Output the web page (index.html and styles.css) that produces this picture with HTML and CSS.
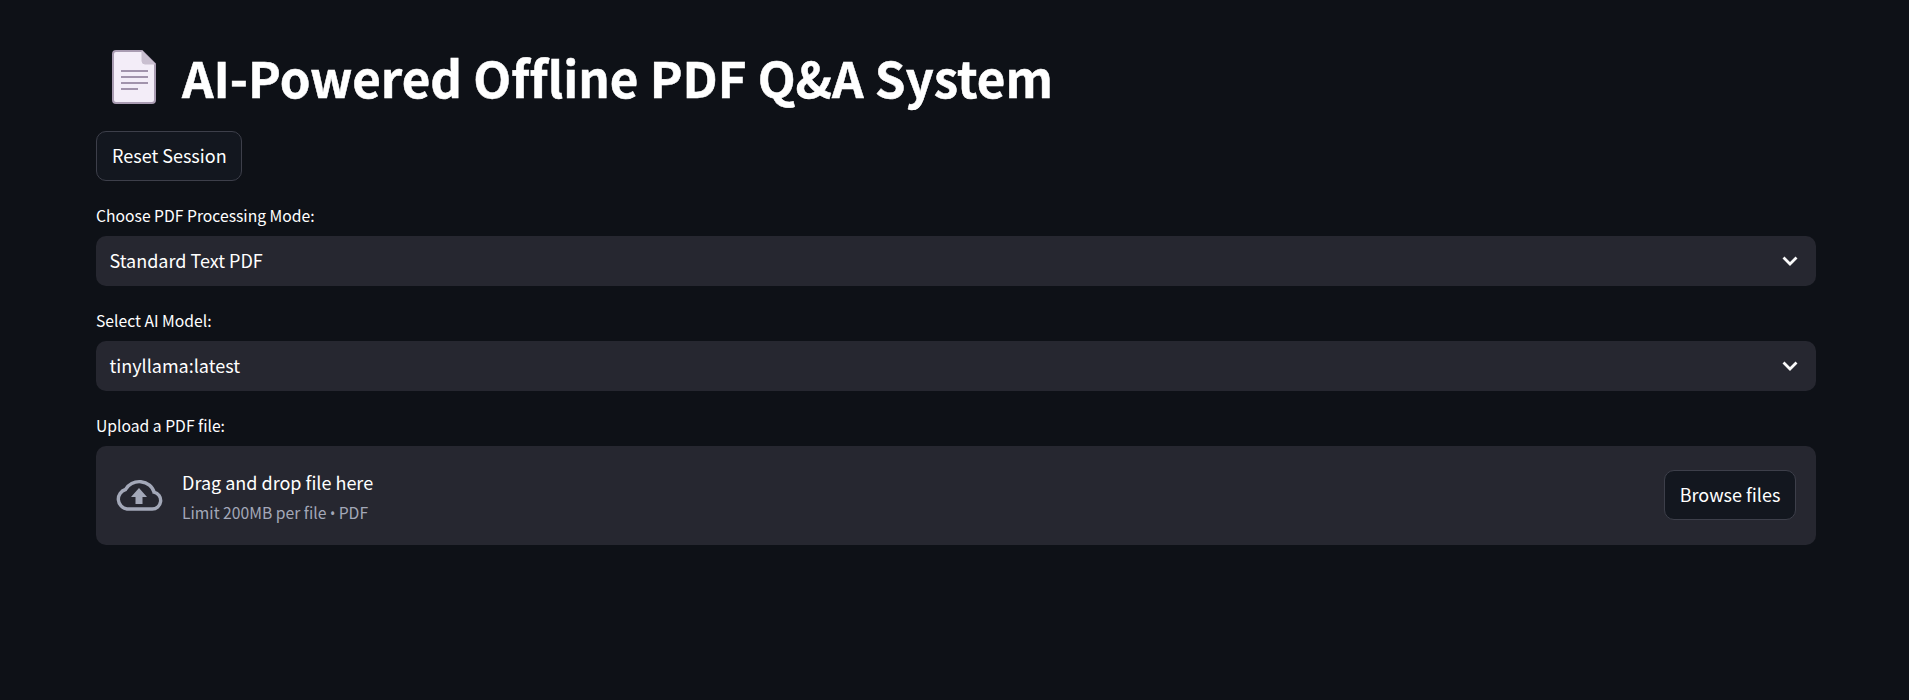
FILE: index.html
```html
<!DOCTYPE html>
<html lang="en">
<head>
    <meta charset="UTF-8">
    <title>AI-Powered Offline PDF Q&amp;A System</title>
    <link rel="stylesheet" href="styles.css">
</head>
<body>
    <main class="main-block">
        <h1 class="page-title">
            <svg class="doc-icon" viewBox="0 0 44 54" width="44" height="54">
                <path d="M4 1H30L43 14V50a3 3 0 0 1-3 3H4a3 3 0 0 1-3-3V4a3 3 0 0 1 3-3Z" fill="#f3edf8" stroke="#a99cb2" stroke-width="2"/>
                <path d="M30 1V11a3 3 0 0 0 3 3H43Z" fill="#c9bfd0" stroke="#c9bfd0" stroke-width="1"/>
                <path d="M9 21H36M9 27H36M9 33H36M9 39H26" stroke="#a193ac" stroke-width="2" fill="none"/>
            </svg>
            <span>AI-Powered Offline PDF Q&amp;A System</span>
        </h1>

        <button class="btn reset-btn" type="button">Reset Session</button>

        <div class="field">
            <label class="field-label">Choose PDF Processing Mode:</label>
            <div class="select-box">
                <span class="select-value">Standard Text PDF</span>
                <svg class="chevron" viewBox="0 0 16 10" width="16" height="10"><path d="M1.500 1.500 8 8 14.500 1.500" fill="none" stroke="#fafafa" stroke-width="2.800"/></svg>
            </div>
        </div>

        <div class="field">
            <label class="field-label">Select AI Model:</label>
            <div class="select-box">
                <span class="select-value">tinyllama:latest</span>
                <svg class="chevron" viewBox="0 0 16 10" width="16" height="10"><path d="M1.500 1.500 8 8 14.500 1.500" fill="none" stroke="#fafafa" stroke-width="2.800"/></svg>
            </div>
        </div>

        <div class="field">
            <label class="field-label">Upload a PDF file:</label>
            <div class="dropzone">
                <svg class="cloud-icon" viewBox="0 0 48 34" width="48" height="34">
                    <path d="M12 31H37a8.500 8.500 0 0 0 2-16.800A15 13 0 0 0 10.500 11.500 10 10 0 0 0 12 31Z" fill="none" stroke="#a3a8b8" stroke-width="3.400"/>
                    <path d="M24 10 32 19H27.500V26H20.500V19H16Z" fill="#a3a8b8"/>
                </svg>
                <div class="drop-text">
                    <span class="drop-title">Drag and drop file here</span>
                    <small class="drop-hint">Limit 200MB per file <span class="dot">•</span> PDF</small>
                </div>
                <button class="btn browse-btn" type="button">Browse files</button>
            </div>
        </div>
    </main>
</body>
</html>
```

FILE: styles.css
```css
body {
    margin: 0;
    height: 700px;
    overflow: hidden;
    background-color: #0e1117;
    color: #fff;
    font-family: 'Noto Sans CJK SC', 'Noto Sans', sans-serif;
    font-variant-ligatures: none;
}
.main-block {
    padding: 38px 93px 0 96px;
}
.page-title {
    display: flex;
    align-items: center;
    gap: 26px;
    height: 78px;
    margin: 0 0 15px 0;
    padding-left: 16px;
    font-size: 49.250px;
    font-weight: 700;
    line-height: 76px;
    -webkit-text-stroke: .5px #fff;
}
.doc-icon {
    flex-shrink: 0;
}
.btn {
    height: 50px;
    padding: 0 15px 2px 15px;
    border: 1px solid #3d3f4a;
    border-radius: 10px;
    background-color: #13171f;
    color: #fff;
    font-family: inherit;
    font-size: 18px;
    white-space: nowrap;
}
.reset-btn {
    display: block;
    width: 146px;
    margin-bottom: 19px;
}
.field {
    margin-bottom: 19px;
}
.field-label {
    display: block;
    height: 36px;
    font-size: 15.700px;
    line-height: 32px;
}
.select-box {
    display: flex;
    align-items: center;
    justify-content: space-between;
    height: 50px;
    padding: 0 18px 0 13.500px;
    border-radius: 10px;
    background-color: #262730;
    font-size: 18px;
}
.select-value {
    margin-top: -2px;
}
.dropzone {
    display: flex;
    align-items: center;
    height: 98px;
    padding: 0 20px 1px 20px;
    border-radius: 10px;
    background-color: #262730;
}
.cloud-icon {
    flex-shrink: 0;
    margin: 0 19px 0 -1px;
}
.drop-text {
    display: flex;
    flex-direction: column;
    flex-grow: 1;
    padding-top: 5px;
}
.drop-title {
    font-size: 18px;
    line-height: 31px;
}
.drop-hint {
    font-size: 15.700px;
    line-height: 30px;
    color: #a3a8b8;
}
.dot {
    font-family: 'Noto Sans', sans-serif;
    font-size: 14px;
}
.browse-btn {
    width: 132px;
    padding: 0 0 2px 0;
}
```
